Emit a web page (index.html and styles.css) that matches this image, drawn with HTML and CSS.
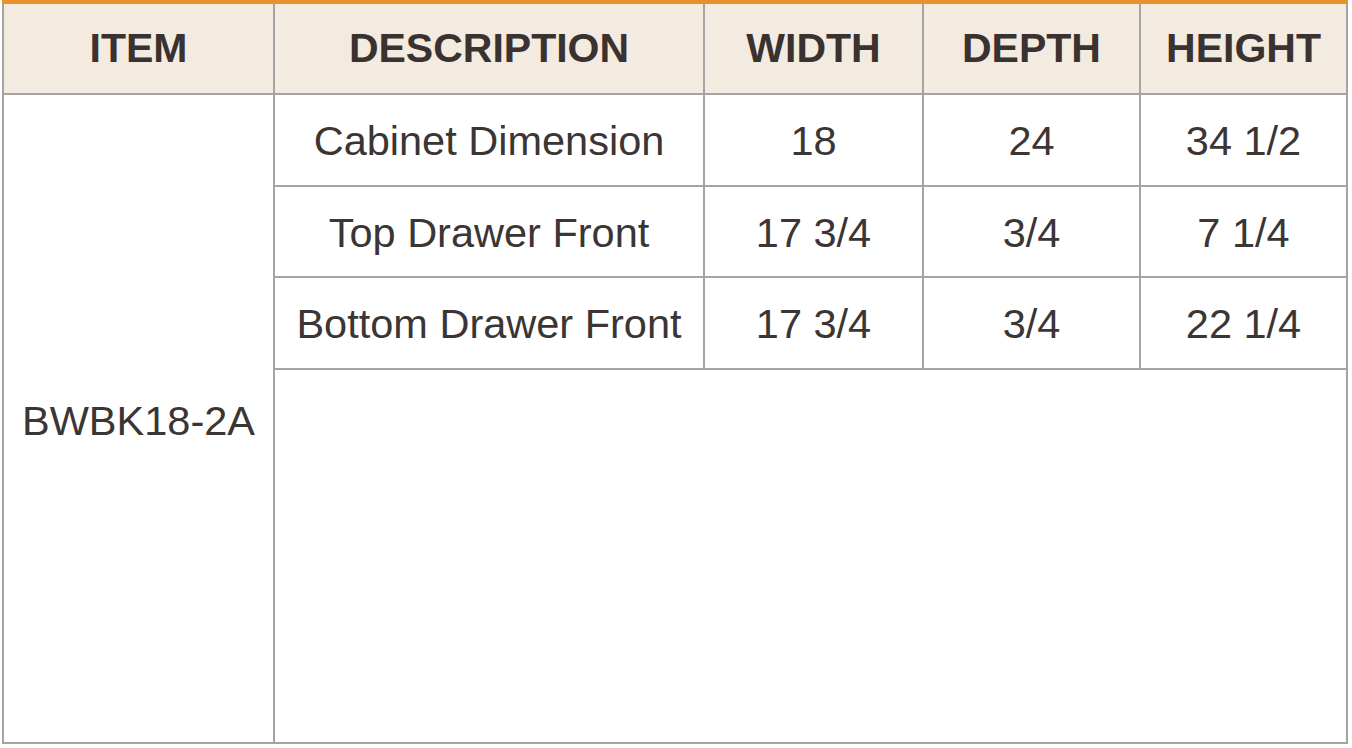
FILE: index.html
```html
<!DOCTYPE html>
<html lang="en">
<head>
<meta charset="utf-8">
<title>BWBK18-2A Dimensions</title>
<link rel="stylesheet" href="styles.css">
</head>
<body>
<table class="spec">
  <colgroup>
    <col class="c-item">
    <col class="c-desc">
    <col class="c-w">
    <col class="c-d">
    <col class="c-h">
  </colgroup>
  <thead>
    <tr class="head">
      <th>ITEM</th>
      <th>DESCRIPTION</th>
      <th>WIDTH</th>
      <th>DEPTH</th>
      <th>HEIGHT</th>
    </tr>
  </thead>
  <tbody>
    <tr class="row">
      <td class="item" rowspan="4">BWBK18-2A</td>
      <td>Cabinet Dimension</td>
      <td>18</td>
      <td>24</td>
      <td>34 1/2</td>
    </tr>
    <tr class="row">
      <td>Top Drawer Front</td>
      <td>17 3/4</td>
      <td>3/4</td>
      <td>7 1/4</td>
    </tr>
    <tr class="row">
      <td>Bottom Drawer Front</td>
      <td>17 3/4</td>
      <td>3/4</td>
      <td>22 1/4</td>
    </tr>
    <tr class="empty">
      <td colspan="4"></td>
    </tr>
  </tbody>
</table>
</body>
</html>
```
FILE: styles.css
```css
html, body {
  margin: 0;
  padding: 0;
  background: #ffffff;
}

body {
  font-family: "Liberation Sans", Arial, sans-serif;
  color: #3b3534;
}

.spec {
  margin-left: 2px;
  border-collapse: collapse;
  table-layout: fixed;
  width: 1344px;
  border-top: 4px solid #e8912b;
}

.c-item { width: 271px; }
.c-desc { width: 430px; }
.c-w { width: 219px; }
.c-d { width: 217px; }
.c-h { width: 207px; }

.spec th,
.spec td {
  border: 2px solid #a4a4a4;
  padding: 0;
  text-align: center;
  vertical-align: middle;
}

.spec th {
  border-top: none;
  background: #f3ebdf;
  font-weight: bold;
  font-size: 41px;
  height: 89px;
  color: #3a3230;
}

.row td {
  font-size: 41.5px;
  height: 86.5px;
  padding-top: 3px;
}

.row td.item {
  font-size: 41.5px;
  padding-top: 6px;
}

.empty td {
  height: 372px;
}
```
